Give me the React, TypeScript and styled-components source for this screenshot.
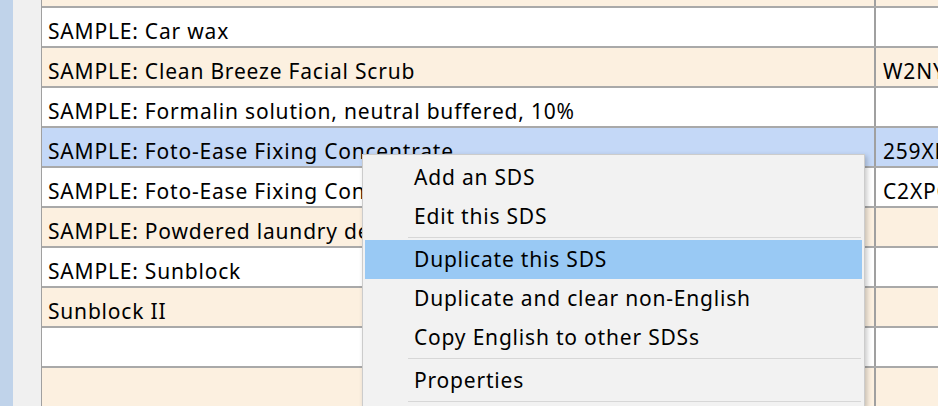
import React from "react";
import styled, { createGlobalStyle } from "styled-components";

const GlobalStyle = createGlobalStyle`
  html, body {
    margin: 0;
    padding: 0;
    overflow: hidden;
    background: #ffffff;
  }
  body {
    font-family: "Noto Sans", "Open Sans", sans-serif;
    font-size: 21px;
    letter-spacing: 0.8px;
    color: #000000;
  }
`;

const Screen = styled.div`
  position: relative;
  display: flex;
  width: 938px;
  height: 406px;
  overflow: hidden;
`;

const SideStrip = styled.div`
  width: 13px;
  flex: none;
  background-color: #c0d3ea;
`;

const RowHeaders = styled.div`
  width: 28px;
  flex: none;
  background-color: #f0f0f0;
  border-right: 1px solid #a0a0a0;
`;

const Grid = styled.div`
  flex: 1;
  display: flex;
  flex-direction: column;
  margin-top: -32px;
  min-width: 0;
`;

const Row = styled.div<{ $tone: "white" | "cream" | "selected" }>`
  display: grid;
  grid-template-columns: 834px 1fr;
  height: 38px;
  flex: none;
  border-bottom: 2px solid #a9a9a9;
  background-color: ${(p) =>
    p.$tone === "selected" ? "#c4d8f7" : p.$tone === "cream" ? "#fcf0e0" : "#ffffff"};
`;

const Cell = styled.div<{ $last?: boolean }>`
  padding: 10px 0 0 ${(p) => (p.$last ? "7px" : "6px")};
  line-height: 26px;
  white-space: nowrap;
  overflow: hidden;
  border-right: ${(p) => (p.$last ? "none" : "2px solid #a0a0a0")};
`;

const Menu = styled.div`
  position: absolute;
  left: 362px;
  top: 154px;
  width: 497px;
  padding: 3px 2px 2px;
  background-color: #f2f2f2;
  border: 1px solid #cccccc;
  box-shadow: 2px 2px 5px rgba(0, 0, 0, 0.22);
`;

const MenuItem = styled.div<{ $active?: boolean }>`
  height: 39px;
  line-height: 38px;
  padding-left: 49px;
  white-space: nowrap;
  background-color: ${(p) => (p.$active ? "#99c9f4" : "transparent")};
`;

const Separator = styled.div`
  height: 4px;
  margin-left: 43px;
  margin-right: 1px;
  box-sizing: border-box;
  padding-top: 1px;

  &::before {
    content: "";
    display: block;
    height: 1px;
    background-color: #d7d7d7;
  }
`;

type RowData = { name: string; code?: string };

const rows: RowData[] = [
  { name: "" },
  { name: "SAMPLE: Car wax" },
  { name: "SAMPLE: Clean Breeze Facial Scrub", code: "W2NYT8" },
  { name: "SAMPLE: Formalin solution, neutral buffered, 10%" },
  { name: "SAMPLE: Foto-Ease Fixing Concentrate", code: "259XE4" },
  { name: "SAMPLE: Foto-Ease Fixing Concentrate", code: "C2XPQ1" },
  { name: "SAMPLE: Powdered laundry detergent" },
  { name: "SAMPLE: Sunblock" },
  { name: "Sunblock II" },
  { name: "" },
  { name: "" },
];

const SELECTED = 4;

export default function App() {
  return (
    <>
      <GlobalStyle />
      <Screen>
        <SideStrip />
        <RowHeaders />
        <Grid>
          {rows.map((r, i) => (
            <Row key={i} $tone={i === SELECTED ? "selected" : i % 2 === 0 ? "cream" : "white"}>
              <Cell>{r.name}</Cell>
              <Cell $last>{r.code}</Cell>
            </Row>
          ))}
        </Grid>
        <Menu>
          <MenuItem>Add an SDS</MenuItem>
          <MenuItem>Edit this SDS</MenuItem>
          <Separator />
          <MenuItem $active>Duplicate this SDS</MenuItem>
          <MenuItem>Duplicate and clear non-English</MenuItem>
          <MenuItem>Copy English to other SDSs</MenuItem>
          <Separator />
          <MenuItem>Properties</MenuItem>
          <Separator />
        </Menu>
      </Screen>
    </>
  );
}
